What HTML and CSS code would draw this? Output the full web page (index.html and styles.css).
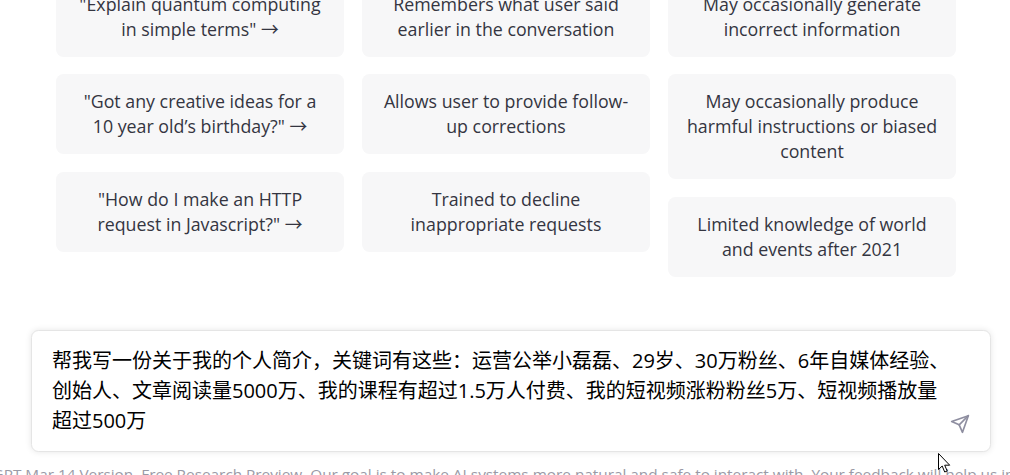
FILE: index.html
```html
<!DOCTYPE html>
<html lang="zh">
<head>
<meta charset="utf-8">
<title>ChatGPT</title>
<link rel="stylesheet" href="styles.css">
</head>
<body>
<main class="page">
  <section class="columns">
    <div class="column">
      <div class="card">"Explain quantum computing in simple terms" →</div>
      <div class="card">"Got any creative ideas for a 10 year old’s birthday?" →</div>
      <div class="card">"How do I make an HTTP request in Javascript?" →</div>
    </div>
    <div class="column">
      <div class="card">Remembers what user said earlier in the conversation</div>
      <div class="card">Allows user to provide follow-up corrections</div>
      <div class="card">Trained to decline inappropriate requests</div>
    </div>
    <div class="column">
      <div class="card">May occasionally generate incorrect information</div>
      <div class="card">May occasionally produce harmful instructions or biased content</div>
      <div class="card">Limited knowledge of world and events after 2021</div>
    </div>
  </section>
  <form class="composer">
    <div class="prompt">帮我写一份关于我的个人简介，关键词有这些：运营公举小磊磊、29岁、30万粉丝、6年自媒体经验、创始人、文章阅读量5000万、我的课程有超过1.5万人付费、我的短视频涨粉粉丝5万、短视频播放量超过500万</div>
    <svg class="send" viewBox="0 0 24 24" fill="none" stroke="currentColor" stroke-width="2" stroke-linecap="round" stroke-linejoin="round" aria-hidden="true"><line x1="22" y1="2" x2="11" y2="13"></line><polygon points="22 2 15 22 11 13 2 9 22 2"></polygon></svg>
  </form>
  <p class="footer">ChatGPT Mar 14 Version. Free Research Preview. Our goal is to make AI systems more natural and safe to interact with. Your feedback will help us improve.</p>
</main>
<svg class="cursor" viewBox="0 0 13 21" aria-hidden="true"><path d="M0.5 0.5V16.5L4.2 13L6.7 19L9.2 18L6.7 12.2H11.7Z" fill="#fff" stroke="#000" stroke-width="1"></path></svg>
</body>
</html>
```
FILE: styles.css
```css
html, body {
  margin: 0;
  height: 475px;
  overflow: hidden;
  background: #fff;
}
.page {
  margin-top: -23.5px;
  width: 1010px;
  font-family: "Open Sans", "Noto Sans CJK SC", sans-serif;
}
.columns {
  display: flex;
  gap: 18px;
  padding: 0 54px 0 56px;
}
.column {
  flex: 0 0 288px;
  display: flex;
  flex-direction: column;
  gap: 17.5px;
}
.card {
  background: #f7f7f8;
  border-radius: 7.5px;
  padding: 15px 18px;
  font-size: 17.8px;
  line-height: 25px;
  text-align: center;
  color: #343541;
}
.composer {
  position: relative;
  box-sizing: border-box;
  margin: 53.5px 19px 0 31px;
  height: 122px;
  padding: 15px 40px 0 20px;
  background: #fff;
  border: 1px solid #e5e5e5;
  border-radius: 7.5px;
  box-shadow: 0 0 6px rgba(0, 0, 0, 0.1);
}
.prompt {
  font-family: "Open Sans", "Noto Sans CJK SC", sans-serif;
  font-size: 20px;
  line-height: 30px;
  color: #000;
}
.send {
  position: absolute;
  right: 20px;
  bottom: 17px;
  width: 20px;
  height: 20px;
  color: #8e8ea0;
}
.footer {
  margin: 12px 0 0 -93px;
  width: 1210px;
  font-size: 15.33px;
  line-height: 20px;
  text-align: center;
  color: #9a9aa6;
  white-space: nowrap;
}
.cursor {
  position: absolute;
  left: 938px;
  top: 453px;
  width: 13px;
  height: 21px;
}
```
